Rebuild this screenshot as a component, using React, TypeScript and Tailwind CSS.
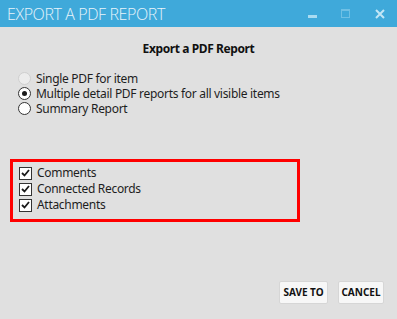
import React, { useState } from 'react'

const font = { fontFamily: '"Noto Sans", "Open Sans", sans-serif' }

const Radio = ({ checked, disabled, label, onClick }: { checked?: boolean; disabled?: boolean; label: string; onClick?: () => void }) => (
    <div className="flex items-center h-[15px] cursor-default" onClick={disabled ? undefined : onClick}>
        <span
            className={`w-[13px] h-[13px] rounded-full border flex items-center justify-center ${
                disabled ? 'border-[#cfcfcf] bg-[#ececec]' : 'border-[#333333] bg-white'
            }`}
        >
            {checked && <span className="w-[5px] h-[5px] rounded-full bg-[#1a1a1a]" />}
        </span>
        <span className="ml-[5px] text-[12px] tracking-[-0.3px] text-[#1e1e1e] leading-[15px]">{label}</span>
    </div>
)

const Check = ({ label }: { label: string }) => {
    const [on, setOn] = useState(true)
    return (
        <div className="flex items-center h-[16px] cursor-default" onClick={() => setOn(!on)}>
            <span className="w-[13px] h-[13px] border border-[#333333] bg-white flex items-center justify-center">
                {on && (
                    <svg width="9" height="8" viewBox="0 0 9 8">
                        <path d="M1 4 L3.5 6.5 L8 1" stroke="#1a1a1a" strokeWidth="1.8" fill="none" />
                    </svg>
                )}
            </span>
            <span className="ml-[5px] text-[12px] tracking-[-0.3px] text-[#1e1e1e] leading-[16px]">{label}</span>
        </div>
    )
}

const App: React.FC = () => {
    const [mode, setMode] = useState('multiple')

    return (
        <div className="w-[397px] h-[319px] bg-[#e0e0e0] flex flex-col overflow-hidden" style={font}>
            {/* title bar */}
            <div className="h-[27px] bg-[#3fa9da] flex items-center pl-[7px] shrink-0">
                <span className="text-[16px] font-light text-[#e8f4fb] tracking-[-0.4px]" style={{ fontFamily: '"Open Sans", sans-serif' }}>
                    EXPORT A PDF REPORT
                </span>
                <div className="ml-auto flex items-center h-full">
                    <span className="w-[9px] h-[3px] bg-[#a9dbf1] mt-[5px] mr-[24px]" />
                    <span className="w-[9px] h-[9px] border border-[#6fc0e5] border-t-[2px] mr-[25px]" />
                    <svg width="10" height="10" viewBox="0 0 10 10" className="mr-[12px]">
                        <path d="M1 1 L9 9 M9 1 L1 9" stroke="#c2e6f6" strokeWidth="2" />
                    </svg>
                </div>
            </div>

            {/* body */}
            <div className="flex flex-col flex-1 pb-[15px]">
                <div className="text-center text-[12px] font-bold tracking-[-0.4px] text-[#111] mt-[14px] leading-[16px]">
                    Export a PDF Report
                </div>

                <div className="flex flex-col pl-[18px] mt-[14px]">
                    <Radio disabled label="Single PDF for item" />
                    <Radio
                        checked={mode === 'multiple'}
                        label="Multiple detail PDF reports for all visible items"
                        onClick={() => setMode('multiple')}
                    />
                    <Radio checked={mode === 'summary'} label="Summary Report" onClick={() => setMode('summary')} />
                </div>

                <div className="ml-[10px] mt-[43px] w-[290px] border-[3px] border-[#ff0000] pl-[6px] pt-[3px] pb-[6px] flex flex-col">
                    <Check label="Comments" />
                    <Check label="Connected Records" />
                    <Check label="Attachments" />
                </div>

                <div className="mt-auto flex justify-end gap-[10px] pr-[13px]">
                    <button className="w-[49px] h-[23px] bg-[#f7f7f7] rounded-[2px] border border-[#d6d6d6] text-[10px] font-bold text-[#111]">
                        SAVE TO
                    </button>
                    <button className="w-[46px] h-[23px] bg-[#f7f7f7] rounded-[2px] border border-[#d6d6d6] text-[10px] font-bold text-[#111]">
                        CANCEL
                    </button>
                </div>
            </div>
        </div>
    )
}

export default App
